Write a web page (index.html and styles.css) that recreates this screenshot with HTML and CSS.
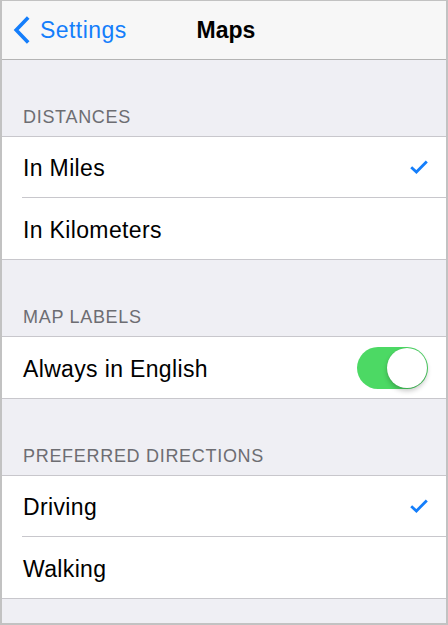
FILE: index.html
```html
<!DOCTYPE html>
<html>
<head>
<meta charset="utf-8">
<link rel="stylesheet" href="styles.css">
</head>
<body>
<div class="frame">
  <header class="nav">
    <div class="back">
      <svg class="chev" width="17" height="28" viewBox="0 0 17 28"><path d="M15.2 1.6 L3.2 14 L15.2 26.4" fill="none" stroke="#147efb" stroke-width="3.6" stroke-linejoin="miter"/></svg>
      <span>Settings</span>
    </div>
    <div class="title">Maps</div>
    <div></div>
  </header>

  <div class="section-head">DISTANCES</div>
  <div class="group">
    <div class="row"><div class="cell"><span class="label">In Miles</span><svg class="check" width="18" height="14" viewBox="0 0 18 14"><path d="M1.2 7.2 L6.4 12 L16.8 1.4" fill="none" stroke="#147efb" stroke-width="2.8"/></svg></div></div>
    <div class="row"><div class="cell"><span class="label">In Kilometers</span></div></div>
  </div>

  <div class="section-head">MAP LABELS</div>
  <div class="group">
    <div class="row"><div class="cell"><span class="label">Always in English</span><div class="toggle"><div class="knob"></div></div></div></div>
  </div>

  <div class="section-head">PREFERRED DIRECTIONS</div>
  <div class="group">
    <div class="row"><div class="cell"><span class="label">Driving</span><svg class="check" width="18" height="14" viewBox="0 0 18 14"><path d="M1.2 7.2 L6.4 12 L16.8 1.4" fill="none" stroke="#147efb" stroke-width="2.8"/></svg></div></div>
    <div class="row"><div class="cell"><span class="label">Walking</span></div></div>
  </div>
</div>
</body>
</html>
```

FILE: styles.css
```css
html, body {
  margin: 0;
  padding: 0;
}
body {
  width: 448px;
  height: 625px;
  overflow: hidden;
  font-family: "Liberation Sans", Arial, sans-serif;
}
.frame {
  box-sizing: border-box;
  width: 448px;
  height: 625px;
  border: 2px solid #c2c2c2;
  border-top-width: 1px;
  background: #efeff4;
  overflow: hidden;
}
.nav {
  height: 58px;
  background: #f7f7f7;
  border-bottom: 1px solid #b4b4b4;
  display: grid;
  grid-template-columns: 1fr auto 1fr;
  align-items: center;
}
.back {
  display: flex;
  align-items: center;
  gap: 10px;
  padding-left: 11px;
  color: #147efb;
  font-size: 23px;
  letter-spacing: 0.45px;
}
.chev {
  display: block;
}
.title {
  font-weight: bold;
  font-size: 23px;
  color: #000;
  padding-left: 4px;
}
.section-head {
  box-sizing: border-box;
  height: 76px;
  display: flex;
  align-items: flex-end;
  padding: 0 20px 10px 21px;
  font-size: 18px;
  line-height: 18px;
  letter-spacing: 0.7px;
  color: #6d6d72;
}
.group {
  background: #fff;
  border-top: 1px solid #c8c7cc;
  border-bottom: 1px solid #c8c7cc;
}
.row {
  padding-left: 20px;
}
.cell {
  box-sizing: border-box;
  height: 61px;
  display: flex;
  align-items: center;
  justify-content: space-between;
  padding: 0 18px 0 1px;
  border-bottom: 1px solid #c8c7cc;
  font-size: 23px;
  letter-spacing: 0.35px;
  color: #000;
}
.label {
  padding-top: 3px;
}
.row:last-child .cell {
  border-bottom: none;
}
.check {
  display: block;
}
.toggle {
  position: relative;
  width: 71px;
  height: 42px;
  border-radius: 21px;
  background: #4cd964;
}
.knob {
  position: absolute;
  right: 1px;
  top: 1px;
  width: 40px;
  height: 40px;
  border-radius: 50%;
  background: #fff;
  box-shadow: 0 3px 5px rgba(0,0,0,0.22), 0 0 1px rgba(0,0,0,0.2);
}
```
